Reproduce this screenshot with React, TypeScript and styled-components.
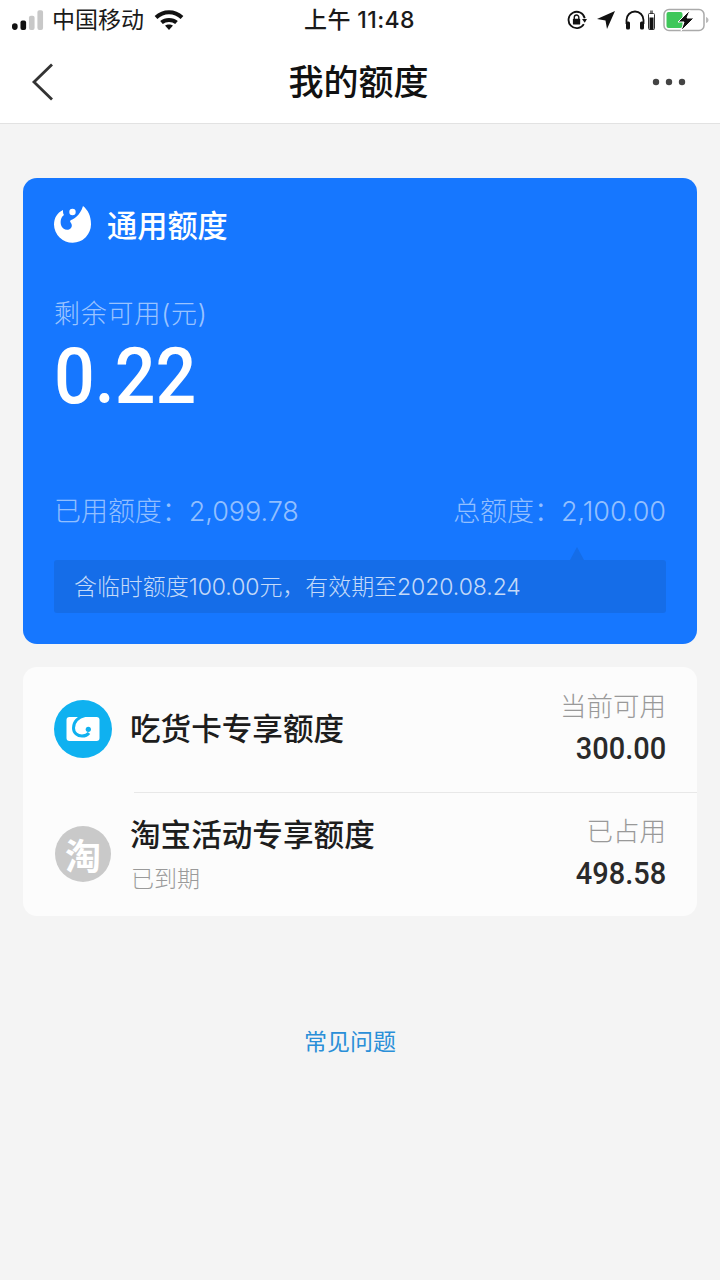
import React from "react";
import styled, { createGlobalStyle } from "styled-components";

const Global = createGlobalStyle`
  html, body { margin: 0; padding: 0; background: #f4f4f4; }
  body { font-family: "Inter", "Noto Sans CJK SC", sans-serif; }
  * { box-sizing: border-box; }
`;
const Page = styled.div`
  width: 720px; height: 1280px; background: #f4f4f4; overflow: hidden;
  display: flex; flex-direction: column;
`;
const Header = styled.header`
  height: 124px; background: #fff; border-bottom: 1px solid #e2e2e2;
  display: flex; flex-direction: column;
`;
const StatusBar = styled.div`
  height: 40px; display: grid; grid-template-columns: 1fr auto 1fr; align-items: center;
  padding: 0 11px 0 12px; color: #1a1a1a;
`;
const StatusLeft = styled.div`display: flex; align-items: center; gap: 8px; font-size: 23px; line-height: 40px;`;
const Carrier = styled.span`margin-right: 2px;`;
const StatusRight = styled.div`display: flex; align-items: center; justify-content: flex-end; gap: 10px;`;
const BatterySlot = styled.span`display: flex; margin-left: -2px;`;
const Clock = styled.div`font-size: 23px; line-height: 40px; font-weight: 500; letter-spacing: 0.4px; padding-right: 2px;`;
const NavBar = styled.div`
  flex: 1; display: grid; grid-template-columns: 1fr auto 1fr; align-items: center; padding: 0 34px 0 31px;
`;
const NavLeft = styled.div`display: flex;`;
const NavRight = styled.div`display: flex; justify-content: flex-end;`;
const Title = styled.h1`margin: 0; font-size: 35px; font-weight: 500; color: #111; line-height: 44px;`;
const Content = styled.main`
  padding: 54px 23px 0; display: flex; flex-direction: column; gap: 23px;
`;
const BlueCard = styled.section`
  height: 466px; border-radius: 14px; background: #1677ff; padding: 26px 31px 0;
  display: flex; flex-direction: column;
`;
const CardHead = styled.div`display: flex; align-items: center; gap: 16px; height: 40px; color: #fff; font-size: 30.2px; font-weight: 500;`;
const Label = styled.div`margin-top: 52px; font-size: 26px; letter-spacing: 0.8px; line-height: 36px; color: rgba(255,255,255,.58); font-weight: 300;`;
const Amount = styled.div`
  font-family: "Roboto", sans-serif; font-size: 78px; line-height: 80px; font-weight: 500; color: #fff;
  margin-top: 5px; transform: scaleX(0.92); transform-origin: left center;
`;
const Totals = styled.div`
  margin-top: 76px; display: flex; justify-content: space-between; font-size: 27px; line-height: 38px;
  letter-spacing: -0.05px; color: rgba(255,255,255,.55); font-weight: 300;
`;
const Note = styled.div`
  position: relative; margin-top: 29px; height: 53px; background: #156de8; border-radius: 3px; padding: 0 0 3px 20px;
  display: flex; align-items: center; font-size: 23px; letter-spacing: -0.07px; color: rgba(255,255,255,.75); font-weight: 300;
  &::after {
    content: ""; position: absolute; top: -13px; right: 82px; border-style: solid;
    border-width: 0 7px 13px 7px; border-color: transparent transparent #156de8 transparent;
  }
`;
const ListCard = styled.section`
  height: 249px; background: #fcfcfc; border-radius: 14px; display: flex; flex-direction: column;
`;
const Row = styled.div<{ $divider?: boolean }>`
  position: relative; flex: 1; display: flex; align-items: center; padding: 0 31px; gap: 18px;
  ${(p) => p.$divider && `&::before { content: ""; position: absolute; top: 0; left: 111px; right: 0; height: 1px; background: #e8e8e8; }`}
`;
const RowMain = styled.div<{ $top?: number }>`flex: 1; display: flex; flex-direction: column; padding-top: ${(p) => p.$top ?? 0}px;`;
const RowTitle = styled.div`font-size: 30.6px; line-height: 40px; font-weight: 500; color: #1d1d1d;`;
const RowSub = styled.div`font-size: 23px; line-height: 34px; color: #9a9a9a; font-weight: 300; margin-top: 7px; padding-left: 1px;`;
const RowSide = styled.div`display: flex; flex-direction: column; align-items: flex-end;`;
const SideLabel = styled.div`font-size: 26.5px; line-height: 36px; color: #999; font-weight: 300; margin-bottom: 4px;`;
const SideValue = styled.div`
  font-family: "Roboto", sans-serif; font-size: 30.5px; line-height: 42px; font-weight: 500; color: #2a2a2a;
  transform: scaleX(0.95); transform-origin: right center;
`;
const Faq = styled.div`
  margin-top: 86px; width: 654px; text-align: center; font-size: 23px; line-height: 34px; color: #2a8fd8; font-weight: 400;
`;

const Signal = () => (
  <svg width="32" height="21" viewBox="0 0 34 22">
    <rect x="0" y="14" width="6" height="7" rx="3" fill="#111" />
    <rect x="9" y="11" width="6" height="10" rx="2" fill="#111" />
    <rect x="18" y="6" width="6" height="15" rx="2" fill="#c8c8c8" />
    <rect x="27" y="0" width="6" height="21" rx="2" fill="#c8c8c8" />
  </svg>
);
const Wifi = () => (
  <svg width="30" height="22" viewBox="0 0 30 22" fill="none" stroke="#111" strokeWidth="4">
    <path d="M2 8.5C9.5 1.5 20.5 1.5 28 8.5" />
    <path d="M7.5 13.5C11.5 10 18.500 10 22.500 13.500" />
    <path d="M11 16.500L15 21L19 16.500C17 15 13 15 11 16.500Z" fill="#111" stroke="none" />
  </svg>
);
const RotationLock = () => (
  <svg width="20" height="20" viewBox="0 0 22 22" fill="none">
    <path d="M18.500 15.500A9 9 0 1 1 19.500 9" stroke="#111" strokeWidth="2" />
    <path d="M22 10L16.500 10L19.500 14Z" fill="#111" />
    <rect x="6.500" y="9.500" width="8" height="6.500" rx="1" fill="#111" />
    <path d="M8 10V8a2.500 2.500 0 0 1 5 0v2" stroke="#111" strokeWidth="1.500" />
  </svg>
);
const Locate = () => (
  <svg width="18" height="18" viewBox="0 0 18 18"><path d="M18 0L0 8L8.500 9.500L10 18Z" fill="#111" /></svg>
);
const Headphones = () => (
  <svg width="30" height="20" viewBox="0 0 30 20" fill="none">
    <path d="M1.500 14V10a8.500 8.500 0 0 1 17 0v4" stroke="#111" strokeWidth="1.800" />
    <rect x="1" y="11.500" width="4" height="8" rx="1.500" fill="#111" />
    <rect x="15" y="11.500" width="4" height="8" rx="1.500" fill="#111" />
    <rect x="23.500" y="3.500" width="6" height="16" rx="1" fill="#fff" stroke="#333" strokeWidth="1" />
    <rect x="24.500" y="7.500" width="4" height="12" fill="#111" />
    <rect x="25" y="0.500" width="3" height="2.500" fill="#777" />
  </svg>
);
const Battery = () => (
  <svg width="46" height="24" viewBox="0 0 46 24" fill="none">
    <rect x="1" y="1.500" width="40" height="21" rx="5" stroke="#aaa" strokeWidth="1.500" />
    <rect x="3.500" y="4" width="16" height="16" rx="2" fill="#3fc75a" />
    <path d="M43 9v6c1.500-.5 2.500-1.500 2.500-3S44.500 9.500 43 9Z" fill="#bbb" />
    <path d="M27 2L15 14h6l-3 9 13-13h-7l3-8Z" fill="#111" stroke="#fff" strokeWidth="1" />
  </svg>
);
const Back = () => (
  <svg width="24" height="38" viewBox="0 0 24 38" fill="none"><path d="M21 1.500L3 19L21 36.500" stroke="#333" strokeWidth="2.800" /></svg>
);
const More = () => (
  <svg width="34" height="8" viewBox="0 0 34 8" fill="#444">
    <circle cx="4" cy="4" r="3.200" /><circle cx="17" cy="4" r="3.200" /><circle cx="30" cy="4" r="3.200" />
  </svg>
);
const Logo = () => (
  <svg width="37" height="38" viewBox="0 0 37 38">
    <path d="M29 1C34 5 37 11 37 19A18.500 18.500 0 0 1 0 19.500C0 13 3 8 9 5C9 7 9 9 10 10C7 12 6 16 7 20C8 24 12 25.500 15 24.500C18 23.500 18.500 20 17 18C16 17 15.500 16 17 15C19 14.500 26 11 29 1Z" fill="#fff" />
    <circle cx="18.500" cy="7" r="3.200" fill="#fff" />
  </svg>
);
const CardIcon = () => (
  <svg width="58" height="58" viewBox="0 0 58 58" fill="none">
    <circle cx="29" cy="29" r="29" fill="#0fb1f0" />
    <rect x="12.500" y="17" width="33" height="24" rx="3" fill="#fff" />
    <path d="M31 15.500C24 17 19.500 22 19.500 28C19.500 33 23.500 36 28 36C31 36 33.500 35 35 33" stroke="#0fb1f0" strokeWidth="3" />
    <circle cx="34.300" cy="29.300" r="2.600" fill="#0fb1f0" />
  </svg>
);
const TaobaoIcon = styled.div`
  width: 56px; height: 56px; margin-left: 1px; margin-right: 1px; border-radius: 50%; background: #c9c9c9; color: #fff;
  display: flex; align-items: center; justify-content: center; font-size: 36px; font-weight: 700; flex-shrink: 0;
`;
const IconSlot = styled.div`width: 58px; height: 58px; flex-shrink: 0; display: flex; align-items: center;`;

export default function App() {
  return (
    <Page>
      <Global />
      <Header>
        <StatusBar>
          <StatusLeft><Signal /><Carrier>中国移动</Carrier><Wifi /></StatusLeft>
          <Clock>上午 11:48</Clock>
          <StatusRight><RotationLock /><Locate /><Headphones /><BatterySlot><Battery /></BatterySlot></StatusRight>
        </StatusBar>
        <NavBar>
          <NavLeft><Back /></NavLeft>
          <Title>我的额度</Title>
          <NavRight><More /></NavRight>
        </NavBar>
      </Header>
      <Content>
        <BlueCard>
          <CardHead><Logo />通用额度</CardHead>
          <Label>剩余可用(元)</Label>
          <Amount>0.22</Amount>
          <Totals><span>已用额度：2,099.78</span><span>总额度：2,100.00</span></Totals>
          <Note>含临时额度100.00元，有效期至2020.08.24</Note>
        </BlueCard>
        <ListCard>
          <Row>
            <IconSlot><CardIcon /></IconSlot>
            <RowMain><RowTitle>吃货卡专享额度</RowTitle></RowMain>
            <RowSide><SideLabel>当前可用</SideLabel><SideValue>300.00</SideValue></RowSide>
          </Row>
          <Row $divider>
            <TaobaoIcon>淘</TaobaoIcon>
            <RowMain $top={3}><RowTitle>淘宝活动专享额度</RowTitle><RowSub>已到期</RowSub></RowMain>
            <RowSide><SideLabel>已占用</SideLabel><SideValue>498.58</SideValue></RowSide>
          </Row>
        </ListCard>
        <Faq>常见问题</Faq>
      </Content>
    </Page>
  );
}
